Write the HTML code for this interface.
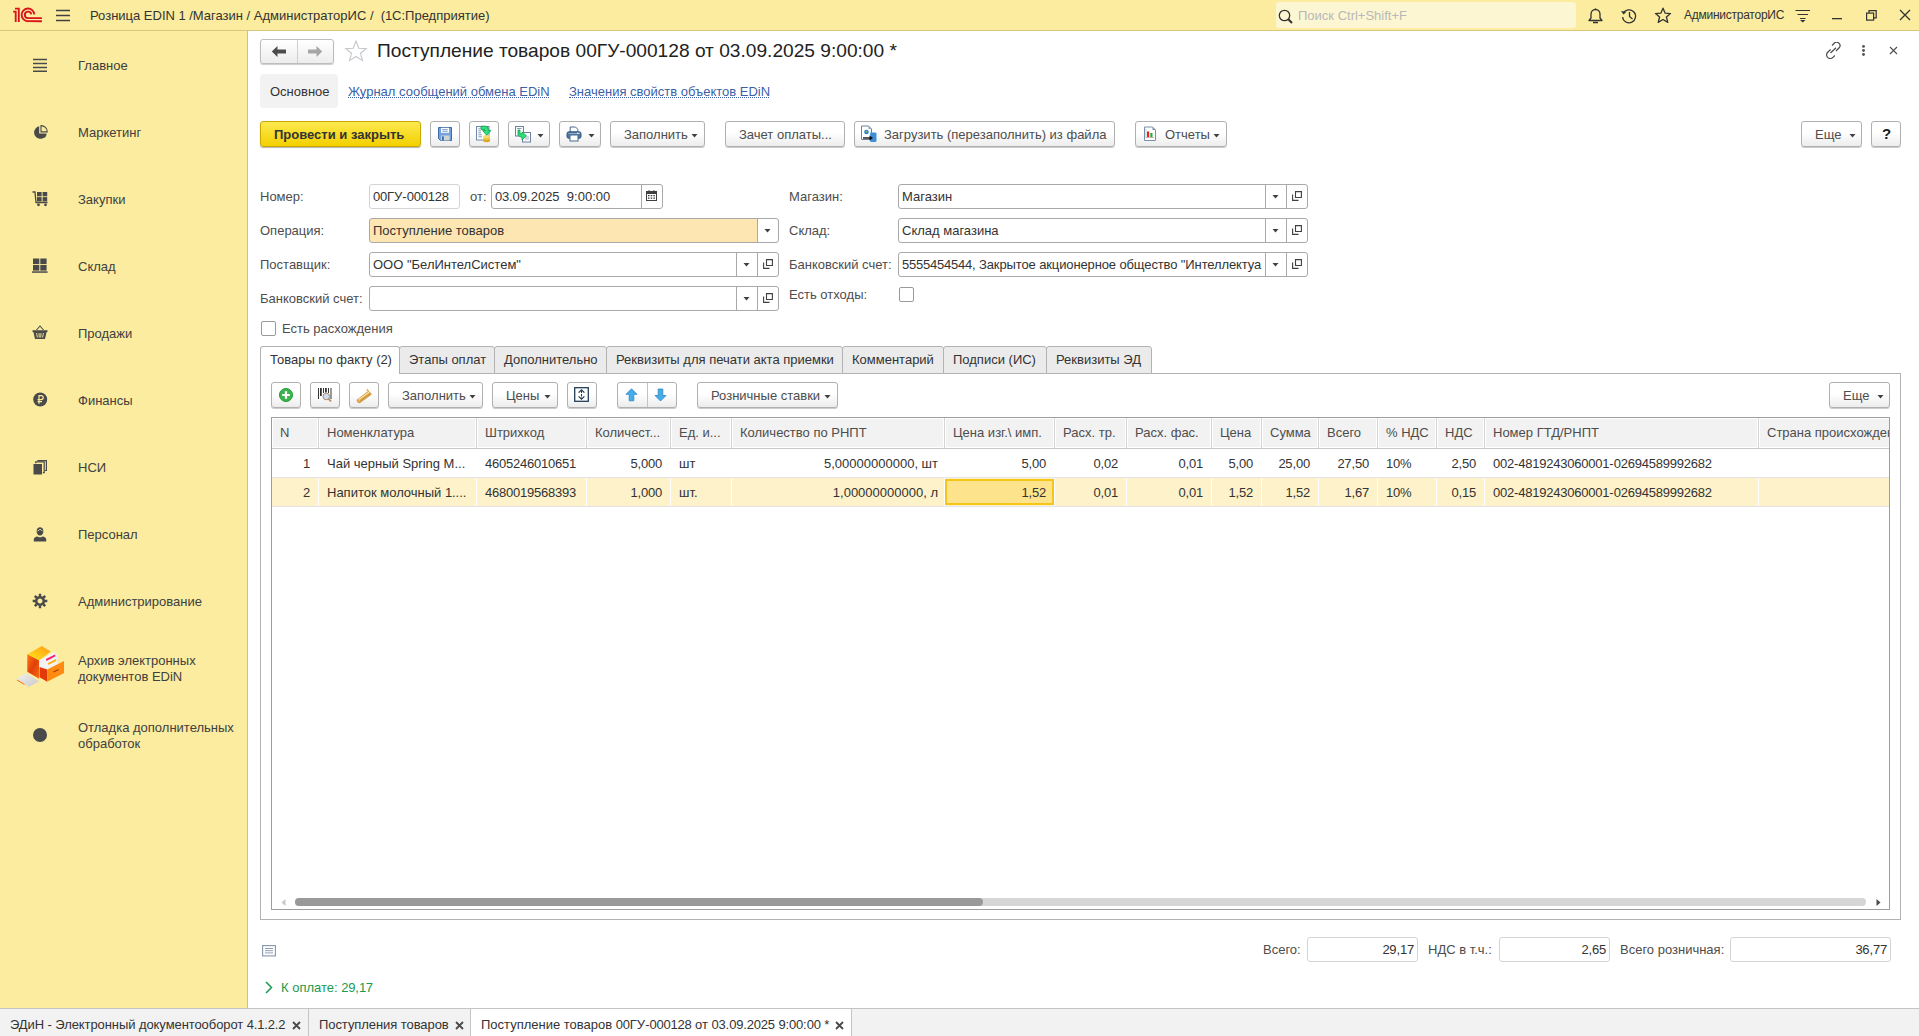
<!DOCTYPE html>
<html><head><meta charset="utf-8">
<style>
*{box-sizing:border-box;margin:0;padding:0}
html,body{width:1919px;height:1036px;overflow:hidden;background:#fff;font-family:"Liberation Sans",sans-serif;font-size:13px;color:#4d4d4d}
.a{position:absolute}
.d{letter-spacing:-0.23px}
.t{position:absolute;white-space:pre;line-height:15px}
#top{left:0;top:0;width:1919px;height:31px;background:#fbec9f;border-bottom:1px solid #d8c67c}
#side{left:0;top:31px;width:248px;height:977px;background:#fbec9f;border-right:1px solid #cfc08a}
.nav{position:absolute;left:78px;color:#404040;font-size:13px;line-height:16px;white-space:pre}
.btn{position:absolute;height:26px;border:1px solid #b0b0b0;border-radius:3px;background:linear-gradient(#fff 0,#fff 45%,#ececec 100%);box-shadow:0 1px 0 rgba(0,0,0,.2);color:#404040;line-height:24px;white-space:pre;text-align:center}
.fld{position:absolute;height:25px;border:1px solid #aaa;border-radius:3px;background:#fff;color:#333;line-height:23px;padding-left:3px;white-space:pre;overflow:hidden}
.lbl{position:absolute;color:#4d4d4d;line-height:15px;white-space:pre}
.dd{position:absolute;top:0;height:23px;width:21px;border-left:1px solid #aaa}
.dd:after{content:"";position:absolute;left:7px;top:10px;border-left:3.5px solid transparent;border-right:3.5px solid transparent;border-top:4px solid #404040}
.arr{display:inline-block;width:0;height:0;border-left:3px solid transparent;border-right:3px solid transparent;border-top:3px solid #404040;vertical-align:middle;margin-left:6px}
#bottom{left:0;top:1008px;width:1919px;height:28px;background:#f2f2f2;border-top:1px solid #c4c4c4}
</style></head><body>

<div id="top" class="a">
 <svg class="a" style="left:10px;top:4px" width="36" height="22" viewBox="10 4 36 22"><g fill="none" stroke="#d9121b" stroke-width="1.85" stroke-linecap="butt"><path d="M13.1 11.6 H15.7 V21.9"/><path d="M15 8.6 H18.8 V21.9"/><path d="M34.3 14.4 A6.35 6.35 0 1 0 28 21.2 H41.9"/><path d="M31.3 14.4 A3.25 3.25 0 1 0 28 18.1 H41.9"/></g></svg>
 <svg class="a" style="left:56px;top:9px" width="15" height="13" viewBox="0 0 15 13"><g stroke="#404040" stroke-width="1.3"><path d="M0 1.5H14M0 6.5H14M0 11.5H14"/></g></svg>
 <div class="t" style="left:90px;top:8px;color:#333">Розница EDIN <span class="d">1</span> /Магазин / АдминистраторИС /  (<span class="d">1</span>С:Предприятие)</div>
 <div class="a" style="left:1276px;top:2px;width:300px;height:26px;background:#fdf6d2;border-radius:3px"></div>
 <svg class="a" style="left:1278px;top:9px" width="17" height="15" viewBox="0 0 17 15"><circle cx="6.5" cy="6.5" r="5.2" fill="none" stroke="#333" stroke-width="1.3"/><path d="M10.3 10.3 L14 14" stroke="#333" stroke-width="2"/></svg>
 <div class="t" style="left:1298px;top:8px;color:#b8b8b8">Поиск Ctrl+Shift+F</div>
 <svg class="a" style="left:1587px;top:7px" width="17" height="18" viewBox="0 0 17 18"><path d="M2 13.5 H15 L13 11 V7 A4.5 4.5 0 0 0 4 7 V11 Z" fill="none" stroke="#333" stroke-width="1.3" stroke-linejoin="round"/><path d="M6 15.5 H11" stroke="#333" stroke-width="1.5"/><path d="M8.5 1.5V2.5" stroke="#333" stroke-width="1.3"/></svg>
 <svg class="a" style="left:1620px;top:7px" width="18" height="18" viewBox="0 0 18 18"><path d="M3.2 6.5 A6.5 6.5 0 1 1 2.6 10" fill="none" stroke="#333" stroke-width="1.3"/><path d="M1 4 L3.5 7.5 L6.5 4.8 Z" fill="#333"/><path d="M9.5 5 V9.5 L12.5 12" fill="none" stroke="#333" stroke-width="1.3"/></svg>
 <svg class="a" style="left:1654px;top:7px" width="18" height="17" viewBox="0 0 18 17"><path d="M9 1.2 L11.2 6.2 L16.5 6.6 L12.4 10 L13.8 15.4 L9 12.5 L4.2 15.4 L5.6 10 L1.5 6.6 L6.8 6.2 Z" fill="none" stroke="#333" stroke-width="1.3" stroke-linejoin="round"/></svg>
 <div class="t" style="left:1684px;top:8px;color:#333;font-size:12px;letter-spacing:-0.25px">АдминистраторИС</div>
 <svg class="a" style="left:1795px;top:9px" width="16" height="14" viewBox="0 0 16 14"><path d="M0.5 1.5H15M2.5 5.5H13M5 9.5H10.5" stroke="#333" stroke-width="1.2"/><path d="M5 11 H10.5 L7.75 13.5 Z" fill="#333"/></svg>
 <svg class="a" style="left:1832px;top:18px" width="11" height="2"><rect width="10" height="1.3" fill="#333"/></svg>
 <svg class="a" style="left:1866px;top:10px" width="11" height="11" viewBox="0 0 11 11"><rect x="0.6" y="3.1" width="7" height="7" fill="none" stroke="#333" stroke-width="1.2"/><path d="M3 3 V0.7 H10.2 V7.8 H7.8" fill="none" stroke="#333" stroke-width="1.2"/></svg>
 <svg class="a" style="left:1899px;top:9px" width="12" height="12" viewBox="0 0 12 12"><path d="M1 1L11 11M11 1L1 11" stroke="#333" stroke-width="1.3"/></svg>
</div>


<div id="side" class="a">
 <svg class="a" style="left:33px;top:27px" width="15" height="15" viewBox="0 0 15 15"><path d="M0 1.5H14M0 5.5H14M0 9.5H14M0 13.3H14" stroke="#4a4a4a" stroke-width="1.6"/></svg>
 <div class="nav" style="top:27px">Главное</div>
 <svg class="a" style="left:33px;top:94px" width="15" height="15" viewBox="0 0 15 15"><path d="M6.2 1.3 A6.3 6.3 0 1 0 13.6 8.6 H6.2 Z" fill="#4a4a4a"/><path d="M8 0.6 V6.9 H14.3 A6.3 6.3 0 0 0 8 0.6 Z" fill="none" stroke="#4a4a4a" stroke-width="1.1"/><path d="M9 9.6 H13.8 L12 12.5 H9Z" fill="#4a4a4a"/></svg>
 <div class="nav" style="top:94px">Маркетинг</div>
 <svg class="a" style="left:32px;top:160px" width="17" height="16" viewBox="0 0 17 16"><path d="M0.5 1 H3 L4 11.5 H15.5" fill="none" stroke="#4a4a4a" stroke-width="1.3"/><rect x="5" y="1" width="4.6" height="4.3" fill="#4a4a4a"/><rect x="10.6" y="1" width="4.6" height="4.3" fill="#4a4a4a"/><rect x="5" y="6.1" width="4.6" height="4.3" fill="#4a4a4a"/><rect x="10.6" y="6.1" width="4.6" height="4.3" fill="#4a4a4a"/><circle cx="6.5" cy="13.8" r="1.4" fill="#4a4a4a"/><circle cx="13.5" cy="13.8" r="1.4" fill="#4a4a4a"/></svg>
 <div class="nav" style="top:161px">Закупки</div>
 <svg class="a" style="left:32px;top:227px" width="16" height="15" viewBox="0 0 16 15"><rect x="1" y="0.5" width="6.3" height="5.6" fill="#4a4a4a"/><rect x="8.3" y="0.5" width="6.3" height="5.6" fill="#4a4a4a"/><rect x="1" y="7" width="6.3" height="5.6" fill="#4a4a4a"/><rect x="8.3" y="7" width="6.3" height="5.6" fill="#4a4a4a"/><rect x="0" y="13.3" width="15.6" height="1.5" fill="#4a4a4a"/></svg>
 <div class="nav" style="top:228px">Склад</div>
 <svg class="a" style="left:32px;top:294px" width="16" height="15" viewBox="0 0 16 15"><path d="M4.5 5 L8 1 L11.5 5" fill="none" stroke="#4a4a4a" stroke-width="1.1"/><path d="M0.5 5.2 H15.5 V7 H14.6 L13 14 H3 L1.4 7 H0.5Z" fill="#4a4a4a"/><path d="M4.6 8 L5.4 12.5 M7 8 L7.3 12.5 M9 8 L8.7 12.5 M11.4 8 L10.6 12.5" stroke="#fbec9f" stroke-width="0.9"/></svg>
 <div class="nav" style="top:295px">Продажи</div>
 <svg class="a" style="left:33px;top:361px" width="15" height="15" viewBox="0 0 15 15"><circle cx="7.2" cy="7.5" r="7" fill="#4a4a4a"/><path d="M6 11.8 V3.6 H8.2 A2 2 0 0 1 8.2 7.6 H4.6 M4.6 9.6 H9" fill="none" stroke="#fbec9f" stroke-width="1.2"/></svg>
 <div class="nav" style="top:362px">Финансы</div>
 <svg class="a" style="left:33px;top:429px" width="14" height="15" viewBox="0 0 14 15"><rect x="0.5" y="4" width="8.5" height="10.5" fill="#4a4a4a"/><path d="M2.7 3.3 V1.9 H11.2 V12.6 H9.8" fill="none" stroke="#4a4a4a" stroke-width="1.2"/><path d="M4.9 1.2 V0.6 H13.4 V10.5 H12" fill="none" stroke="#4a4a4a" stroke-width="1.2"/></svg>
 <div class="nav" style="top:429px">НСИ</div>
 <svg class="a" style="left:33px;top:496px" width="14" height="15" viewBox="0 0 14 15"><path d="M3.6 4.6 C3.6 1.5 5.2 0.3 7 0.3 C8.8 0.3 10.4 1.5 10.4 4.6 C10.4 6.8 9 8.6 7 8.6 C5 8.6 3.6 6.8 3.6 4.6Z" fill="#4a4a4a"/><path d="M0.8 14.6 V12.4 C0.8 10.6 2.4 9.6 4.6 9.4 C5.3 10 6.1 10.2 7 10.2 C7.9 10.2 8.7 10 9.4 9.4 C11.6 9.6 13.2 10.6 13.2 12.4 V14.6Z" fill="#4a4a4a"/><path d="M4.4 4.2 C5.5 3.8 6.5 2.8 7 2 C7.8 3 9 3.8 9.6 4" fill="none" stroke="#fbec9f" stroke-width="0.8"/></svg>
 <div class="nav" style="top:496px">Персонал</div>
 <svg class="a" style="left:32px;top:562px" width="16" height="16" viewBox="-8 -8 16 16"><g fill="#4a4a4a"><path d="M-1.3 -7.4 H1.3 L1.6 -5 L3.8 -4.1 L5.6 -5.6 L7.4 -3.8 L5.9 -1.9 L6.7 0.3 L7.4 1.4 L7.4 1.3 L5.7 1.6 L4.8 3.8 L6.2 5.6 L4.1 7.5 L2.3 6 L0.3 6.8 L-0.1 7.4 Z" opacity="0"/></g>
  <g fill="none" stroke="#4a4a4a"><circle r="3.8" stroke-width="2.6"/></g>
  <g stroke="#4a4a4a" stroke-width="2.4"><path d="M0 -7.3V-4.5M0 4.5V7.3M-7.3 0H-4.5M4.5 0H7.3M-5.2 -5.2L-3.2 -3.2M5.2 5.2L3.2 3.2M-5.2 5.2L-3.2 3.2M5.2 -5.2L3.2 -3.2"/></g></svg>
 <div class="nav" style="top:563px">Администрирование</div>

 <svg class="a" style="left:10px;top:609px" width="60" height="52" viewBox="0 0 60 52">
  <defs>
   <linearGradient id="gtop" x1="0" y1="1" x2="1" y2="0"><stop offset="0" stop-color="#ffe81a"/><stop offset="1" stop-color="#ff9a10"/></linearGradient>
   <linearGradient id="gleft" x1="0" y1="0" x2="1" y2="1"><stop offset="0" stop-color="#ff7a10"/><stop offset="0.5" stop-color="#e0400a"/><stop offset="1" stop-color="#ff6a10"/></linearGradient>
   <linearGradient id="gbook" x1="0" y1="0" x2="1" y2="1"><stop offset="0" stop-color="#f2f2f2"/><stop offset="1" stop-color="#c8c8c8"/></linearGradient>
  </defs>
  <path d="M17.6 14.3 L31.7 6 L40.7 11.6 L29.1 20.6 Z" fill="url(#gtop)"/>
  <path d="M17.3 14.3 V31.7 L29.1 38.7 V20.6 Z" fill="url(#gleft)"/>
  <path d="M29.6 20 L44 12 L47 15 L47 29 L37.2 34 L29.6 30 Z" fill="#f3f3f3"/>
  <path d="M36 19 L45 14.5 L45.5 16.3 L36.5 21 Z" fill="#ff1a6a"/>
  <path d="M38 23 L46 19 L46.3 21 L38.3 25 Z" fill="#ffb010"/>
  <path d="M29.6 27.1 L37.2 29.6 V41.7 L29.6 37.2 Z" fill="#e33a0a"/>
  <path d="M37.2 29.6 L54 21.1 V32.9 L37.2 41.7 Z" fill="#ff8a12"/>
  <path d="M43.5 32 L48.5 29.5" stroke="#b03a08" stroke-width="1.3"/>
  <path d="M6.5 38.7 L16.6 33.2 L29.1 41.2 L19.1 46.7 Z" fill="url(#gbook)"/>
  <path d="M7 40 L14.5 44.5" stroke="#ff5a10" stroke-width="0.9"/>
 </svg>
 <div class="nav" style="top:622px">Архив электронных
документов EDiN</div>
 <div class="nav" style="top:689px">Отладка дополнительных
обработок</div>
 <svg class="a" style="left:33px;top:697px" width="14" height="14"><circle cx="7" cy="7" r="7" fill="#4a4a4a"/></svg>
</div>


<!-- header -->
<div class="a" style="left:260px;top:39px;width:74px;height:25px;border:1px solid #bdbdbd;border-radius:3px;background:linear-gradient(#fff,#ededed);box-shadow:0 1px 1px rgba(0,0,0,.2)"></div>
<div class="a" style="left:297px;top:40px;width:1px;height:23px;background:#cfcfcf"></div>
<svg class="a" style="left:271px;top:45px" width="16" height="13" viewBox="0 0 16 13"><path d="M0.8 6.5 L6.5 1 V4.6 H15 V8.4 H6.5 V12 Z" fill="#4d4d4d"/></svg>
<svg class="a" style="left:307px;top:45px" width="16" height="13" viewBox="0 0 16 13"><path d="M15.2 6.5 L9.5 1 V4.6 H1 V8.4 H9.5 V12 Z" fill="#a6a6a6"/></svg>
<svg class="a" style="left:344px;top:40px" width="24" height="22" viewBox="0 0 24 22"><path d="M12 1.2 L14.8 8.2 L22.3 8.6 L16.5 13.3 L18.5 20.6 L12 16.5 L5.5 20.6 L7.5 13.3 L1.7 8.6 L9.2 8.2 Z" fill="none" stroke="#c3c7cc" stroke-width="1.1" stroke-linejoin="miter"/></svg>
<div class="t" style="left:377px;top:40px;font-size:19.15px;line-height:22px;color:#222">Поступление товаров 00ГУ-000128 от 03.09.2025 9:00:00 *</div>
<svg class="a" style="left:1825px;top:42px" width="17" height="17" viewBox="0 0 17 17"><g fill="none" stroke="#4d4d4d" stroke-width="1.2" stroke-linecap="butt"><path d="M7 3.5 L8.8 1.8 A2.8 2.8 0 0 1 14.4 5.5 L11 9"/><path d="M9.8 13.5 L8 15.3 A2.8 2.8 0 0 1 2.5 10.5 L5.6 7.5"/><path d="M5.5 11 L11 5.7"/></g></svg>
<svg class="a" style="left:1860px;top:43px" width="7" height="14"><circle cx="3.5" cy="3.4" r="1.45" fill="#555"/><circle cx="3.5" cy="7.5" r="1.45" fill="#555"/><circle cx="3.5" cy="11.5" r="1.45" fill="#555"/></svg>
<svg class="a" style="left:1889px;top:46px" width="9" height="9" viewBox="0 0 9 9"><path d="M1 1L8 8M8 1L1 8" stroke="#4d4d4d" stroke-width="1.1"/></svg>
<div class="a" style="left:260px;top:74px;width:78px;height:34px;background:#f2f2f2;border-radius:4px"></div>
<div class="t" style="left:270px;top:84px;color:#333">Основное</div>
<div class="t" style="left:348px;top:84px;color:#3c5fa8">Журнал сообщений обмена EDiN</div>
<div class="a" style="left:348px;top:97px;width:201px;height:1px;border-top:1px dotted #3c5fa8"></div>
<div class="t" style="left:569px;top:84px;color:#3c5fa8">Значения свойств объектов EDiN</div>
<div class="a" style="left:569px;top:97px;width:200px;height:1px;border-top:1px dotted #3c5fa8"></div>

<!-- toolbar -->
<div class="a" style="left:260px;top:121px;width:161px;height:26px;border:1px solid #c9a800;border-radius:3px;background:linear-gradient(#fde94f,#f3d000);box-shadow:0 1px 1px rgba(0,0,0,.3)"></div>
<div class="t" style="left:274px;top:127px;font-weight:bold;color:#333">Провести и закрыть</div>
<div class="btn" style="left:430px;top:121px;width:30px"></div>
<svg class="a" style="left:437px;top:126px" width="16" height="16" viewBox="0 0 16 16"><path d="M1.5 1.5 H14.5 V14.5 H3.5 L1.5 12.5Z" fill="#74a3dc" stroke="#3d6ba8" stroke-width="1"/><rect x="4" y="1.8" width="8" height="5" fill="#fff"/><path d="M5.3 3.6H10.7M5.3 5.3H10.7" stroke="#6d94c6" stroke-width="0.9"/><rect x="4" y="9.5" width="8.5" height="5" fill="#cfd6d2"/><rect x="5" y="10.3" width="1.8" height="4.2" fill="#3d6ba8"/></svg>
<div class="btn" style="left:469px;top:121px;width:30px"></div>
<svg class="a" style="left:475px;top:125px" width="18" height="18" viewBox="475 125 18 18"><rect x="476.5" y="126.5" width="12.5" height="13.5" fill="#fff" stroke="#7089a8" stroke-width="1"/><path d="M478.3 128.8H480.5M478.3 130.8H481M478.3 132.8H481M478.3 134.8H482M478.3 136.8H482" stroke="#7f93ad" stroke-width="0.9"/><ellipse cx="486.6" cy="140.6" rx="3.5" ry="1.6" fill="#d9a520"/><ellipse cx="486.6" cy="138.6" rx="3.5" ry="1.6" fill="#ecc43a"/><ellipse cx="486.6" cy="136.6" rx="3.5" ry="1.6" fill="#f7dc6a"/><path d="M481 126.2 H485.5 Q488.3 126.2 488.3 129 V130.6 H490.8 L486.7 135.2 L482.6 130.6 H485 V129.8 Q485 129.4 484.6 129.4 H481 Z" fill="#2ee27f" stroke="#13a350" stroke-width="0.9" stroke-linejoin="round"/></svg>
<div class="btn" style="left:508px;top:121px;width:42px"></div>
<svg class="a" style="left:514px;top:125px" width="18" height="18" viewBox="0 0 18 18"><rect x="1.5" y="1.5" width="8" height="9.5" fill="#fff" stroke="#6b82a0" stroke-width="1"/><path d="M3 3.5H7.5" stroke="#8a9bb0"/><rect x="8.5" y="7.5" width="8" height="9.5" fill="#fff" stroke="#6b82a0" stroke-width="1"/><path d="M11 12H15M11 14H15" stroke="#8a9bb0" stroke-width="0.8"/><path d="M4 5 H6 V9 L8 8.5 V7 L12.5 10.8 L8 14.8 V12.5 L4 10.5Z" fill="#2be07c" stroke="#13a04e" stroke-width="0.8"/></svg>
<svg class="a" style="left:537px;top:134px" width="7" height="4"><path d="M0.5 0H6.5L3.5 3.4Z" fill="#404040"/></svg>
<div class="btn" style="left:559px;top:121px;width:42px"></div>
<svg class="a" style="left:566px;top:126px" width="16" height="16" viewBox="0 0 16 16"><path d="M4.2 6 V1 H9.5 L11.8 3.3 V6" fill="#fff" stroke="#46688e" stroke-width="1"/><rect x="1" y="5.8" width="14" height="6.5" rx="1.8" fill="#4f77a3" stroke="#2f5680" stroke-width="1"/><rect x="4" y="9" width="8" height="6" fill="#fff" stroke="#46688e" stroke-width="1"/><path d="M2.5 7.6H13" stroke="#b8cce0" stroke-width="0.7"/><circle cx="11.5" cy="7.2" r=".6" fill="#fff"/><circle cx="13" cy="7.2" r=".6" fill="#fff"/></svg>
<svg class="a" style="left:588px;top:134px" width="7" height="4"><path d="M0.5 0H6.5L3.5 3.4Z" fill="#404040"/></svg>
<div class="btn" style="left:610px;top:121px;width:95px"></div>
<div class="t" style="left:624px;top:127px">Заполнить</div>
<svg class="a" style="left:691px;top:134px" width="7" height="4"><path d="M0.5 0H6.5L3.5 3.4Z" fill="#404040"/></svg>
<div class="btn" style="left:725px;top:121px;width:120px"></div>
<div class="t" style="left:739px;top:127px">Зачет оплаты...</div>
<div class="btn" style="left:854px;top:121px;width:261px"></div>
<svg class="a" style="left:860px;top:125px" width="18" height="18" viewBox="0 0 18 18"><path d="M1.5 1 H8.5 L11.5 4 V14.5 H1.5Z" fill="#fff" stroke="#6b82a0" stroke-width="1"/><path d="M8.5 1 V4 H11.5" fill="#8aa0bc"/><circle cx="6.5" cy="7" r="2.3" fill="#2a7fd8"/><path d="M5.5 6.2 L7.5 6 L6.8 8" fill="#7ad03a"/><path d="M10.2 7.5 H15.5 A1.3 1.3 0 0 1 16.5 9 V15.5 A1.5 1.5 0 0 1 15 17 H11.5 A1.5 1.5 0 0 1 10 15.5Z" fill="#3d90d8"/><path d="M3 13 H10.5" stroke="#111" stroke-width="1.4"/><path d="M9.5 10.5 L13 13 L9.5 15.5Z" fill="#111"/></svg>
<div class="t" style="left:884px;top:127px">Загрузить (перезаполнить) из файла</div>
<div class="btn" style="left:1135px;top:121px;width:92px"></div>
<svg class="a" style="left:1143px;top:126px" width="14" height="16" viewBox="0 0 14 16"><path d="M1.5 1 H9.5 L12.5 4 V14.5 H1.5Z" fill="#fff" stroke="#7a90a8" stroke-width="1"/><path d="M9.5 1 V4 H12.5Z" fill="#7a90a8"/><rect x="4" y="5.5" width="2.2" height="5.5" fill="#f51e1e"/><rect x="7.3" y="7" width="2.2" height="4" fill="#18b43a"/><path d="M2.8 11.5H11" stroke="#c07080" stroke-width="0.6"/><path d="M3 3V11.5" stroke="#9ab" stroke-width="0.6"/></svg>
<div class="t" style="left:1165px;top:127px">Отчеты</div>
<svg class="a" style="left:1213px;top:134px" width="7" height="4"><path d="M0.5 0H6.5L3.5 3.4Z" fill="#404040"/></svg>
<div class="btn" style="left:1801px;top:121px;width:61px"></div>
<div class="t" style="left:1815px;top:127px">Еще</div>
<svg class="a" style="left:1849px;top:134px" width="7" height="4"><path d="M0.5 0H6.5L3.5 3.4Z" fill="#404040"/></svg>
<div class="btn" style="left:1871px;top:121px;width:30px"></div>
<div class="t" style="left:1882px;top:126px;font-weight:bold;color:#1a1a1a;font-size:15px">?</div>
<!-- form -->
<div class="lbl" style="left:260px;top:189px">Номер:</div>
<div class="fld" style="left:369px;top:184px;width:91px;background:#fff;border-color:#d4d4d4;color:#333"><span class="d">00</span>ГУ-<span class="d">000128</span></div>
<div class="lbl" style="left:470px;top:189px">от:</div>
<div class="fld" style="left:491px;top:184px;width:172px;background:#fff;border-color:#a9a9a9;color:#333"><span class="d">03</span>.09.2025  9:00:00</div>
<div class="a" style="left:641px;top:185px;width:1px;height:23px;background:#a9a9a9"></div>
<svg class="a" style="left:646px;top:190px" width="11" height="11" viewBox="0 0 11 11"><rect x="0.5" y="1.5" width="10" height="9" fill="#fff" stroke="#404040" stroke-width="1"/><rect x="0.5" y="1.5" width="10" height="2.5" fill="#404040"/><path d="M3 0.3V2M8 0.3V2" stroke="#404040" stroke-width="1.2"/><g fill="#404040"><rect x="2" y="5" width="1.5" height="1.3"/><rect x="4.7" y="5" width="1.5" height="1.3"/><rect x="7.4" y="5" width="1.5" height="1.3"/><rect x="2" y="7.5" width="1.5" height="1.3"/><rect x="4.7" y="7.5" width="1.5" height="1.3"/><rect x="7.4" y="7.5" width="1.5" height="1.3"/></g></svg>
<div class="lbl" style="left:789px;top:189px">Магазин:</div>
<div class="fld" style="left:898px;top:184px;width:410px;background:#fff;border-color:#a9a9a9;color:#333">Магазин</div>
<div class="a" style="left:1265px;top:185px;width:1px;height:23px;background:#a9a9a9"></div>
<div class="a" style="left:1286px;top:185px;width:1px;height:23px;background:#a9a9a9"></div>
<svg class="a" style="left:1272px;top:195px" width="7" height="4"><path d="M0.5 0H6.5L3.5 3.4Z" fill="#404040"/></svg>
<svg class="a" style="left:1292px;top:191px" width="10" height="10" viewBox="0 0 10 10"><path d="M3.5 0.6 H9.4 V6.5 H3.5Z M0.6 3.5 V9.4 H6.5" fill="none" stroke="#404040" stroke-width="1.1"/></svg>
<div class="lbl" style="left:789px;top:223px">Склад:</div>
<div class="fld" style="left:898px;top:218px;width:410px;background:#fff;border-color:#a9a9a9;color:#333">Склад магазина</div>
<div class="a" style="left:1265px;top:219px;width:1px;height:23px;background:#a9a9a9"></div>
<div class="a" style="left:1286px;top:219px;width:1px;height:23px;background:#a9a9a9"></div>
<svg class="a" style="left:1272px;top:229px" width="7" height="4"><path d="M0.5 0H6.5L3.5 3.4Z" fill="#404040"/></svg>
<svg class="a" style="left:1292px;top:225px" width="10" height="10" viewBox="0 0 10 10"><path d="M3.5 0.6 H9.4 V6.5 H3.5Z M0.6 3.5 V9.4 H6.5" fill="none" stroke="#404040" stroke-width="1.1"/></svg>
<div class="lbl" style="left:789px;top:257px">Банковский счет:</div>
<div class="fld" style="left:898px;top:252px;width:410px;background:#fff;border-color:#a9a9a9;color:#333"><span style="display:block;width:363px;overflow:hidden;letter-spacing:-0.12px"><span class="d">5555454544</span>, Закрытое акционерное общество "Интеллектуа</span></div>
<div class="a" style="left:1265px;top:253px;width:1px;height:23px;background:#a9a9a9"></div>
<div class="a" style="left:1286px;top:253px;width:1px;height:23px;background:#a9a9a9"></div>
<svg class="a" style="left:1272px;top:263px" width="7" height="4"><path d="M0.5 0H6.5L3.5 3.4Z" fill="#404040"/></svg>
<svg class="a" style="left:1292px;top:259px" width="10" height="10" viewBox="0 0 10 10"><path d="M3.5 0.6 H9.4 V6.5 H3.5Z M0.6 3.5 V9.4 H6.5" fill="none" stroke="#404040" stroke-width="1.1"/></svg>
<div class="lbl" style="left:260px;top:223px">Операция:</div>
<div class="fld" style="left:369px;top:218px;width:410px;background:linear-gradient(90deg,#fde6b2 0,#fde6b2 388px,#fff 388px);border-color:#a9a9a9;color:#333">Поступление товаров</div>
<div class="a" style="left:757px;top:219px;width:1px;height:23px;background:#a9a9a9"></div>
<svg class="a" style="left:764px;top:229px" width="7" height="4"><path d="M0.5 0H6.5L3.5 3.4Z" fill="#404040"/></svg>
<div class="lbl" style="left:260px;top:257px">Поставщик:</div>
<div class="fld" style="left:369px;top:252px;width:410px;background:#fff;border-color:#a9a9a9;color:#333">ООО "БелИнтелСистем"</div>
<div class="a" style="left:736px;top:253px;width:1px;height:23px;background:#a9a9a9"></div>
<div class="a" style="left:757px;top:253px;width:1px;height:23px;background:#a9a9a9"></div>
<svg class="a" style="left:743px;top:263px" width="7" height="4"><path d="M0.5 0H6.5L3.5 3.4Z" fill="#404040"/></svg>
<svg class="a" style="left:763px;top:259px" width="10" height="10" viewBox="0 0 10 10"><path d="M3.5 0.6 H9.4 V6.5 H3.5Z M0.6 3.5 V9.4 H6.5" fill="none" stroke="#404040" stroke-width="1.1"/></svg>
<div class="lbl" style="left:260px;top:291px">Банковский счет:</div>
<div class="fld" style="left:369px;top:286px;width:410px;background:#fff;border-color:#a9a9a9;color:#333"></div>
<div class="a" style="left:736px;top:287px;width:1px;height:23px;background:#a9a9a9"></div>
<div class="a" style="left:757px;top:287px;width:1px;height:23px;background:#a9a9a9"></div>
<svg class="a" style="left:743px;top:297px" width="7" height="4"><path d="M0.5 0H6.5L3.5 3.4Z" fill="#404040"/></svg>
<svg class="a" style="left:763px;top:293px" width="10" height="10" viewBox="0 0 10 10"><path d="M3.5 0.6 H9.4 V6.5 H3.5Z M0.6 3.5 V9.4 H6.5" fill="none" stroke="#404040" stroke-width="1.1"/></svg>
<div class="lbl" style="left:789px;top:287px">Есть отходы:</div>
<div class="a" style="left:899px;top:287px;width:15px;height:15px;border:1px solid #9a9a9a;border-radius:2px;background:#fff"></div>
<div class="a" style="left:261px;top:321px;width:15px;height:15px;border:1px solid #9a9a9a;border-radius:2px;background:#fff"></div>
<div class="lbl" style="left:282px;top:321px">Есть расхождения</div>
<!-- tabs panel -->
<div class="a" style="left:260px;top:373px;width:1641px;height:547px;border:1px solid #b3b3b3;border-top:none"></div>
<div class="a" style="left:1151px;top:373px;width:750px;height:1px;background:#b3b3b3"></div>
<div class="a" style="left:260px;top:346px;width:140px;height:28px;border:1px solid #b3b3b3;border-bottom:none;border-radius:3px 3px 0 0;background:#fff"></div>
<div class="t" style="left:270px;top:352px;color:#333">Товары по факту (<span class="d">2</span>)</div>
<div class="a" style="left:399px;top:346px;width:96px;height:28px;border:1px solid #b3b3b3;border-radius:3px 3px 0 0;background:#ebebeb"></div>
<div class="t" style="left:409px;top:352px;color:#333">Этапы оплат</div>
<div class="a" style="left:494px;top:346px;width:113px;height:28px;border:1px solid #b3b3b3;border-radius:3px 3px 0 0;background:#ebebeb"></div>
<div class="t" style="left:504px;top:352px;color:#333">Дополнительно</div>
<div class="a" style="left:606px;top:346px;width:237px;height:28px;border:1px solid #b3b3b3;border-radius:3px 3px 0 0;background:#ebebeb"></div>
<div class="t" style="left:616px;top:352px;color:#333">Реквизиты для печати акта приемки</div>
<div class="a" style="left:842px;top:346px;width:102px;height:28px;border:1px solid #b3b3b3;border-radius:3px 3px 0 0;background:#ebebeb"></div>
<div class="t" style="left:852px;top:352px;color:#333">Комментарий</div>
<div class="a" style="left:943px;top:346px;width:104px;height:28px;border:1px solid #b3b3b3;border-radius:3px 3px 0 0;background:#ebebeb"></div>
<div class="t" style="left:953px;top:352px;color:#333">Подписи (ИС)</div>
<div class="a" style="left:1046px;top:346px;width:106px;height:28px;border:1px solid #b3b3b3;border-radius:3px 3px 0 0;background:#ebebeb"></div>
<div class="t" style="left:1056px;top:352px;color:#333">Реквизиты ЭД</div>
<div class="btn" style="left:271px;top:382px;width:30px"></div>
<svg class="a" style="left:279px;top:388px" width="14" height="14" viewBox="0 0 14 14"><circle cx="7" cy="7" r="6.5" fill="#3fb34f" stroke="#1e9a33" stroke-width="1"/><path d="M7 3.2V10.8M3.2 7H10.8" stroke="#fff" stroke-width="2.2"/></svg>
<div class="btn" style="left:310px;top:382px;width:30px"></div>
<svg class="a" style="left:317px;top:387px" width="17" height="17" viewBox="0 0 17 17"><g fill="#333"><rect x="1" y="1" width="1" height="11"/><rect x="3" y="1" width="1.8" height="8"/><rect x="6" y="1" width="1" height="5"/><rect x="8" y="1" width="1.8" height="4.5"/><rect x="11" y="1" width="1" height="5"/><rect x="13.5" y="1" width="1" height="11"/></g><circle cx="9.3" cy="9.5" r="3.3" fill="#c9def5" stroke="#b58a60" stroke-width="1"/><path d="M11.6 11.8 L14 14.5" stroke="#b98a5c" stroke-width="1.8"/></svg>
<div class="btn" style="left:349px;top:382px;width:30px"></div>
<svg class="a" style="left:355px;top:388px" width="18" height="16" viewBox="0 0 18 16"><path d="M2 12 L13.5 3.2 L16.5 6.2 L5 14.6 Q2.5 15.5 2 12Z" fill="#e9b35a" stroke="#c58a30" stroke-width="0.8"/><path d="M3.5 11.5 L14 4.2" stroke="#fff0c0" stroke-width="1"/><path d="M5 13 L15 5.8" stroke="#b97a28" stroke-width="0.7"/><path d="M11 2.5 L12.5 0.8 L14 3Z" fill="#f3a12a"/></svg>
<div class="btn" style="left:388px;top:382px;width:95px"></div>
<div class="t" style="left:402px;top:388px">Заполнить</div>
<svg class="a" style="left:469px;top:395px" width="7" height="4"><path d="M0.5 0H6.5L3.5 3.4Z" fill="#404040"/></svg>
<div class="btn" style="left:492px;top:382px;width:66px"></div>
<div class="t" style="left:506px;top:388px">Цены</div>
<svg class="a" style="left:544px;top:395px" width="7" height="4"><path d="M0.5 0H6.5L3.5 3.4Z" fill="#404040"/></svg>
<div class="btn" style="left:567px;top:382px;width:30px"></div>
<svg class="a" style="left:574px;top:387px" width="15" height="15" viewBox="0 0 15 15"><rect x="0.7" y="0.7" width="13.6" height="13.6" fill="#fff" stroke="#233d56" stroke-width="1.3"/><path d="M7.5 3.5V11.5" stroke="#233d56" stroke-width="1.1" stroke-dasharray="2.5 1"/><path d="M4.6 5.6 L7.5 2.8 L10.4 5.6M4.6 9.4 L7.5 12.2 L10.4 9.4" fill="none" stroke="#233d56" stroke-width="1.3"/></svg>
<div class="btn" style="left:617px;top:382px;width:60px"></div>
<div class="a" style="left:647px;top:383px;width:1px;height:24px;background:#c3c3c3"></div>
<svg class="a" style="left:625px;top:388px" width="13" height="14" viewBox="0 0 13 14"><path d="M6.5 0.8 L12 6.3 H8.8 V12.8 H4.2 V6.3 H1Z" fill="#47ade9" stroke="#2a86c8" stroke-width="0.8"/></svg>
<svg class="a" style="left:654px;top:388px" width="13" height="14" viewBox="0 0 13 14"><path d="M6.5 13 L12 7.5 H8.8 V1 H4.2 V7.5 H1Z" fill="#47ade9" stroke="#2a86c8" stroke-width="0.8"/></svg>
<div class="btn" style="left:697px;top:382px;width:141px"></div>
<div class="t" style="left:711px;top:388px">Розничные ставки</div>
<svg class="a" style="left:824px;top:395px" width="7" height="4"><path d="M0.5 0H6.5L3.5 3.4Z" fill="#404040"/></svg>
<div class="btn" style="left:1829px;top:382px;width:61px"></div>
<div class="t" style="left:1843px;top:388px">Еще</div>
<svg class="a" style="left:1877px;top:395px" width="7" height="4"><path d="M0.5 0H6.5L3.5 3.4Z" fill="#404040"/></svg>
<!-- table -->
<div class="a" style="left:271px;top:417px;width:1619px;height:493px;border:1px solid #9d9d9d;background:#fff;overflow:hidden">
<div class="a" style="left:0;top:0;width:1617px;height:30px;background:#f2f2f2"></div>
<div class="a" style="left:0;top:30px;width:1617px;height:1px;background:#c9c9c9"></div>
<div class="a" style="left:45px;top:0;width:1px;height:30px;background:#fff"></div><div class="a" style="left:47px;top:0;width:1px;height:30px;background:#fff"></div>
<div class="a" style="left:203px;top:0;width:1px;height:30px;background:#fff"></div><div class="a" style="left:205px;top:0;width:1px;height:30px;background:#fff"></div>
<div class="a" style="left:313px;top:0;width:1px;height:30px;background:#fff"></div><div class="a" style="left:315px;top:0;width:1px;height:30px;background:#fff"></div>
<div class="a" style="left:397px;top:0;width:1px;height:30px;background:#fff"></div><div class="a" style="left:399px;top:0;width:1px;height:30px;background:#fff"></div>
<div class="a" style="left:458px;top:0;width:1px;height:30px;background:#fff"></div><div class="a" style="left:460px;top:0;width:1px;height:30px;background:#fff"></div>
<div class="a" style="left:671px;top:0;width:1px;height:30px;background:#fff"></div><div class="a" style="left:673px;top:0;width:1px;height:30px;background:#fff"></div>
<div class="a" style="left:781px;top:0;width:1px;height:30px;background:#fff"></div><div class="a" style="left:783px;top:0;width:1px;height:30px;background:#fff"></div>
<div class="a" style="left:853px;top:0;width:1px;height:30px;background:#fff"></div><div class="a" style="left:855px;top:0;width:1px;height:30px;background:#fff"></div>
<div class="a" style="left:938px;top:0;width:1px;height:30px;background:#fff"></div><div class="a" style="left:940px;top:0;width:1px;height:30px;background:#fff"></div>
<div class="a" style="left:988px;top:0;width:1px;height:30px;background:#fff"></div><div class="a" style="left:990px;top:0;width:1px;height:30px;background:#fff"></div>
<div class="a" style="left:1045px;top:0;width:1px;height:30px;background:#fff"></div><div class="a" style="left:1047px;top:0;width:1px;height:30px;background:#fff"></div>
<div class="a" style="left:1104px;top:0;width:1px;height:30px;background:#fff"></div><div class="a" style="left:1106px;top:0;width:1px;height:30px;background:#fff"></div>
<div class="a" style="left:1163px;top:0;width:1px;height:30px;background:#fff"></div><div class="a" style="left:1165px;top:0;width:1px;height:30px;background:#fff"></div>
<div class="a" style="left:1211px;top:0;width:1px;height:30px;background:#fff"></div><div class="a" style="left:1213px;top:0;width:1px;height:30px;background:#fff"></div>
<div class="a" style="left:1485px;top:0;width:1px;height:30px;background:#fff"></div><div class="a" style="left:1487px;top:0;width:1px;height:30px;background:#fff"></div>
<div class="a" style="left:0;top:0;width:1617px;height:1px;background:#fff"></div><div class="a" style="left:0;top:29px;width:1617px;height:1px;background:#fff"></div><div class="a" style="left:0;top:0;width:1px;height:30px;background:#fff"></div>
<div class="a" style="left:46px;top:0;width:1px;height:30px;background:#d4d4d4"></div>
<div class="a" style="left:204px;top:0;width:1px;height:30px;background:#d4d4d4"></div>
<div class="a" style="left:314px;top:0;width:1px;height:30px;background:#d4d4d4"></div>
<div class="a" style="left:398px;top:0;width:1px;height:30px;background:#d4d4d4"></div>
<div class="a" style="left:459px;top:0;width:1px;height:30px;background:#d4d4d4"></div>
<div class="a" style="left:672px;top:0;width:1px;height:30px;background:#d4d4d4"></div>
<div class="a" style="left:782px;top:0;width:1px;height:30px;background:#d4d4d4"></div>
<div class="a" style="left:854px;top:0;width:1px;height:30px;background:#d4d4d4"></div>
<div class="a" style="left:939px;top:0;width:1px;height:30px;background:#d4d4d4"></div>
<div class="a" style="left:989px;top:0;width:1px;height:30px;background:#d4d4d4"></div>
<div class="a" style="left:1046px;top:0;width:1px;height:30px;background:#d4d4d4"></div>
<div class="a" style="left:1105px;top:0;width:1px;height:30px;background:#d4d4d4"></div>
<div class="a" style="left:1164px;top:0;width:1px;height:30px;background:#d4d4d4"></div>
<div class="a" style="left:1212px;top:0;width:1px;height:30px;background:#d4d4d4"></div>
<div class="a" style="left:1486px;top:0;width:1px;height:30px;background:#d4d4d4"></div>
<div class="t" style="left:8px;top:7px;color:#4d4d4d">N</div>
<div class="t" style="left:55px;top:7px;color:#4d4d4d">Номенклатура</div>
<div class="t" style="left:213px;top:7px;color:#4d4d4d">Штрихкод</div>
<div class="t" style="left:323px;top:7px;color:#4d4d4d">Количест...</div>
<div class="t" style="left:407px;top:7px;color:#4d4d4d">Ед. и...</div>
<div class="t" style="left:468px;top:7px;color:#4d4d4d">Количество по РНПТ</div>
<div class="t" style="left:681px;top:7px;color:#4d4d4d">Цена изг.\ имп.</div>
<div class="t" style="left:791px;top:7px;color:#4d4d4d">Расх. тр.</div>
<div class="t" style="left:863px;top:7px;color:#4d4d4d">Расх. фас.</div>
<div class="t" style="left:948px;top:7px;color:#4d4d4d">Цена</div>
<div class="t" style="left:998px;top:7px;color:#4d4d4d">Сумма</div>
<div class="t" style="left:1055px;top:7px;color:#4d4d4d">Всего</div>
<div class="t" style="left:1114px;top:7px;color:#4d4d4d">% НДС</div>
<div class="t" style="left:1173px;top:7px;color:#4d4d4d">НДС</div>
<div class="t" style="left:1221px;top:7px;color:#4d4d4d">Номер ГТД/РНПТ</div>
<div class="t" style="left:1495px;top:7px;color:#4d4d4d">Страна происхожден</div>
<div class="a" style="left:0;top:31px;width:1617px;height:28px;background:#fff"></div>
<div class="a" style="left:0;top:59px;width:1617px;height:1px;background:#e3e3e3"></div>
<div class="t" style="left:0px;top:38px;width:38px;text-align:right;color:#333"><span class="d">1</span></div>
<div class="t" style="left:55px;top:38px;color:#333">Чай черный Spring M...</div>
<div class="t" style="left:213px;top:38px;color:#333"><span class="d">4605246010651</span></div>
<div class="t" style="left:315px;top:38px;width:75px;text-align:right;color:#333"><span class="d">5</span>,<span class="d">000</span></div>
<div class="t" style="left:407px;top:38px;color:#333">шт</div>
<div class="t" style="left:460px;top:38px;width:206px;text-align:right;color:#333">5,00000000000, шт</div>
<div class="t" style="left:673px;top:38px;width:101px;text-align:right;color:#333"><span class="d">5</span>,<span class="d">00</span></div>
<div class="t" style="left:783px;top:38px;width:63px;text-align:right;color:#333"><span class="d">0</span>,<span class="d">02</span></div>
<div class="t" style="left:855px;top:38px;width:76px;text-align:right;color:#333"><span class="d">0</span>,<span class="d">01</span></div>
<div class="t" style="left:940px;top:38px;width:41px;text-align:right;color:#333"><span class="d">5</span>,<span class="d">00</span></div>
<div class="t" style="left:990px;top:38px;width:48px;text-align:right;color:#333"><span class="d">25</span>,<span class="d">00</span></div>
<div class="t" style="left:1047px;top:38px;width:50px;text-align:right;color:#333"><span class="d">27</span>,<span class="d">50</span></div>
<div class="t" style="left:1114px;top:38px;color:#333"><span class="d">10</span>%</div>
<div class="t" style="left:1165px;top:38px;width:39px;text-align:right;color:#333"><span class="d">2</span>,<span class="d">50</span></div>
<div class="t" style="left:1221px;top:38px;color:#333"><span class="d">002</span>-<span class="d">4819243060001</span>-<span class="d">02694589992682</span></div>
<div class="a" style="left:0;top:60px;width:1617px;height:28px;background:#fdf2c9"></div>
<div class="a" style="left:0;top:88px;width:1617px;height:1px;background:#e3e3e3"></div>
<div class="a" style="left:46px;top:60px;width:1px;height:28px;background:#fff"></div>
<div class="a" style="left:204px;top:60px;width:1px;height:28px;background:#fff"></div>
<div class="a" style="left:314px;top:60px;width:1px;height:28px;background:#fff"></div>
<div class="a" style="left:398px;top:60px;width:1px;height:28px;background:#fff"></div>
<div class="a" style="left:459px;top:60px;width:1px;height:28px;background:#fff"></div>
<div class="a" style="left:672px;top:60px;width:1px;height:28px;background:#fff"></div>
<div class="a" style="left:782px;top:60px;width:1px;height:28px;background:#fff"></div>
<div class="a" style="left:854px;top:60px;width:1px;height:28px;background:#fff"></div>
<div class="a" style="left:939px;top:60px;width:1px;height:28px;background:#fff"></div>
<div class="a" style="left:989px;top:60px;width:1px;height:28px;background:#fff"></div>
<div class="a" style="left:1046px;top:60px;width:1px;height:28px;background:#fff"></div>
<div class="a" style="left:1105px;top:60px;width:1px;height:28px;background:#fff"></div>
<div class="a" style="left:1164px;top:60px;width:1px;height:28px;background:#fff"></div>
<div class="a" style="left:1212px;top:60px;width:1px;height:28px;background:#fff"></div>
<div class="a" style="left:1486px;top:60px;width:1px;height:28px;background:#fff"></div>
<div class="a" style="left:673px;top:61px;width:109px;height:26px;border:2px solid #f5c518;background:#fde38c"></div>
<div class="t" style="left:0px;top:67px;width:38px;text-align:right;color:#333"><span class="d">2</span></div>
<div class="t" style="left:55px;top:67px;color:#333">Напиток молочный <span class="d">1</span>....</div>
<div class="t" style="left:213px;top:67px;color:#333"><span class="d">4680019568393</span></div>
<div class="t" style="left:315px;top:67px;width:75px;text-align:right;color:#333"><span class="d">1</span>,<span class="d">000</span></div>
<div class="t" style="left:407px;top:67px;color:#333">шт.</div>
<div class="t" style="left:460px;top:67px;width:206px;text-align:right;color:#333">1,00000000000, л</div>
<div class="t" style="left:673px;top:67px;width:101px;text-align:right;color:#333"><span class="d">1</span>,<span class="d">52</span></div>
<div class="t" style="left:783px;top:67px;width:63px;text-align:right;color:#333"><span class="d">0</span>,<span class="d">01</span></div>
<div class="t" style="left:855px;top:67px;width:76px;text-align:right;color:#333"><span class="d">0</span>,<span class="d">01</span></div>
<div class="t" style="left:940px;top:67px;width:41px;text-align:right;color:#333"><span class="d">1</span>,<span class="d">52</span></div>
<div class="t" style="left:990px;top:67px;width:48px;text-align:right;color:#333"><span class="d">1</span>,<span class="d">52</span></div>
<div class="t" style="left:1047px;top:67px;width:50px;text-align:right;color:#333"><span class="d">1</span>,<span class="d">67</span></div>
<div class="t" style="left:1114px;top:67px;color:#333"><span class="d">10</span>%</div>
<div class="t" style="left:1165px;top:67px;width:39px;text-align:right;color:#333"><span class="d">0</span>,<span class="d">15</span></div>
<div class="t" style="left:1221px;top:67px;color:#333"><span class="d">002</span>-<span class="d">4819243060001</span>-<span class="d">02694589992682</span></div>
<svg class="a" style="left:9px;top:481px" width="5" height="7"><path d="M4.5 0V7L0.5 3.5Z" fill="#c8c8c8"/></svg>
<div class="a" style="left:23px;top:480px;width:1571px;height:8px;border-radius:4px;background:#d6d6d6"></div>
<div class="a" style="left:23px;top:480px;width:688px;height:8px;border-radius:4px;background:#999"></div>
<svg class="a" style="left:1604px;top:481px" width="5" height="7"><path d="M0.5 0V7L4.5 3.5Z" fill="#4d4d4d"/></svg>
</div>
<!-- totals -->
<svg class="a" style="left:262px;top:945px" width="14" height="12" viewBox="0 0 14 12"><rect x="0.6" y="0.6" width="12.8" height="10.3" fill="#fff" stroke="#8595ab" stroke-width="1.1"/><path d="M3 3.5H11M3 5.7H11M3 7.9H11" stroke="#8595ab" stroke-width="0.9"/></svg>
<div class="lbl" style="left:1263px;top:942px">Всего:</div>
<div class="fld" style="left:1307px;top:937px;width:111px;border-color:#d4d4d4;text-align:right;padding-right:3px;padding-left:0"><span class="d">29</span>,<span class="d">17</span></div>
<div class="lbl" style="left:1428px;top:942px">НДС в т.ч.:</div>
<div class="fld" style="left:1499px;top:937px;width:111px;border-color:#d4d4d4;text-align:right;padding-right:3px;padding-left:0"><span class="d">2</span>,<span class="d">65</span></div>
<div class="lbl" style="left:1620px;top:942px">Всего розничная:</div>
<div class="fld" style="left:1730px;top:937px;width:161px;border-color:#d4d4d4;text-align:right;padding-right:3px;padding-left:0"><span class="d">36</span>,<span class="d">77</span></div>
<svg class="a" style="left:265px;top:981px" width="8" height="13" viewBox="0 0 8 13"><path d="M1 1 L6.5 6.5 L1 12" fill="none" stroke="#1a9a50" stroke-width="1.5"/></svg>
<div class="t" style="left:281px;top:980px;color:#1a9a50">К оплате: <span class="d">29</span>,<span class="d">17</span></div>
<div id="bottom" class="a">
 <div class="a" style="left:308px;top:0;width:1px;height:28px;background:#c4c4c4"></div>
 <div class="a" style="left:470px;top:0;width:1px;height:28px;background:#c4c4c4"></div>
 <div class="a" style="left:471px;top:0;width:380px;height:28px;background:#fff"></div>
 <div class="a" style="left:851px;top:0;width:1px;height:28px;background:#c4c4c4"></div>
 <div class="t" style="left:10px;top:8px;color:#333;letter-spacing:-0.08px">ЭДиН - Электронный документооборот <span class="d">4</span>.<span class="d">1</span>.<span class="d">2</span>.<span class="d">2</span></div>
 <svg class="a" style="left:292px;top:12px" width="9" height="9" viewBox="0 0 9 9"><path d="M1 1L8 8M8 1L1 8" stroke="#4a4a4a" stroke-width="1.8"/></svg>
 <div class="t" style="left:319px;top:8px;color:#333;letter-spacing:-0.07px">Поступления товаров</div>
 <svg class="a" style="left:455px;top:12px" width="9" height="9" viewBox="0 0 9 9"><path d="M1 1L8 8M8 1L1 8" stroke="#4a4a4a" stroke-width="1.8"/></svg>
 <div class="t" style="left:481px;top:8px;color:#333">Поступление товаров <span class="d">00</span>ГУ-<span class="d">000128</span> от <span class="d">03</span>.<span class="d">09</span>.<span class="d">2025</span> <span class="d">9</span>:<span class="d">00</span>:<span class="d">00</span> *</div>
 <svg class="a" style="left:835px;top:12px" width="9" height="9" viewBox="0 0 9 9"><path d="M1 1L8 8M8 1L1 8" stroke="#4a4a4a" stroke-width="1.8"/></svg>
</div>
</body></html>
